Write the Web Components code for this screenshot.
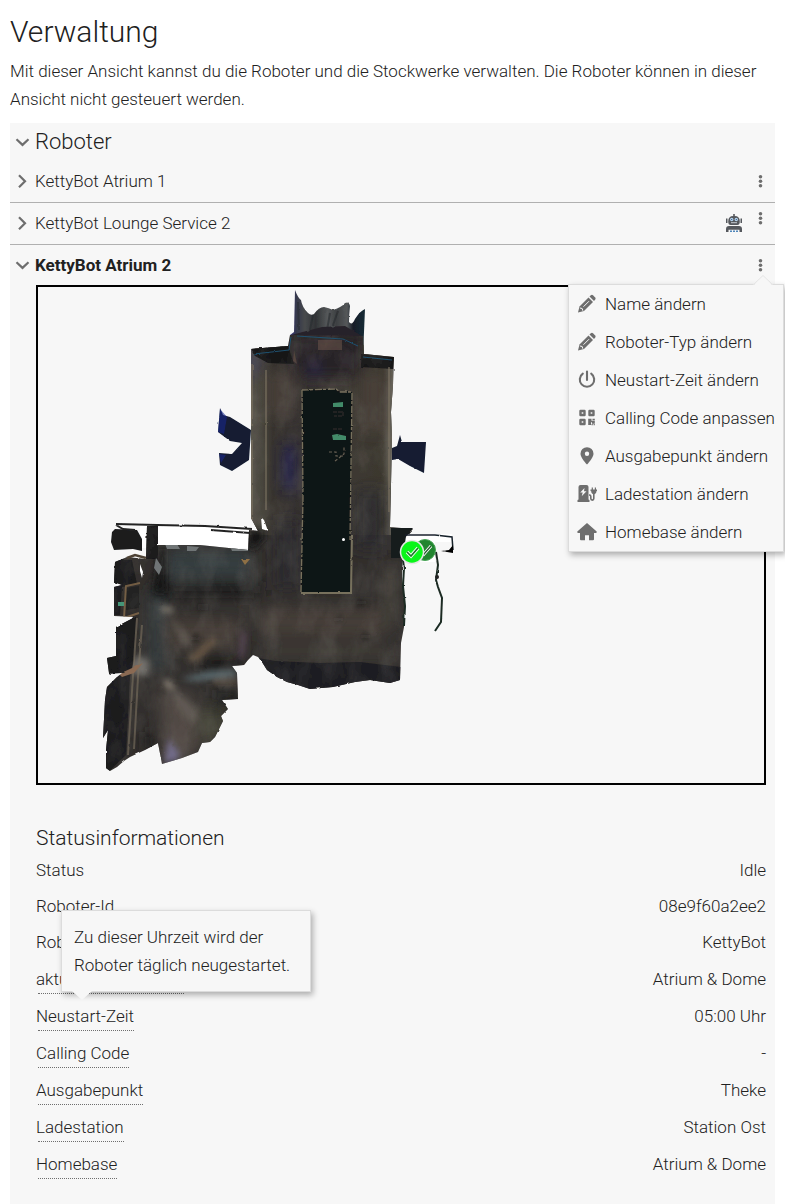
<!DOCTYPE html>
<html lang="de">
<head>
<meta charset="utf-8">
<meta name="viewport" content="width=device-width, initial-scale=1">
<title>Verwaltung</title>
<style>
  body { margin: 0; background: #fff; color: #212121; font: 300 17px/28px Roboto, sans-serif; }
</style>
</head>
<body>
<admin-page>
  <span slot="title">Verwaltung</span>
  <span slot="intro">Mit dieser Ansicht kannst du die Roboter und die Stockwerke verwalten. Die Roboter können in dieser Ansicht nicht gesteuert werden.</span>
  <robot-row>KettyBot Atrium 1</robot-row>
  <robot-row busy>KettyBot Lounge Service 2</robot-row>
  <robot-row open>KettyBot Atrium 2
    <action-menu slot="menu">
      <menu-entry icon="pencil">Name ändern</menu-entry>
      <menu-entry icon="pencil">Roboter-Typ ändern</menu-entry>
      <menu-entry icon="power">Neustart-Zeit ändern</menu-entry>
      <menu-entry icon="qr">Calling Code anpassen</menu-entry>
      <menu-entry icon="pin">Ausgabepunkt ändern</menu-entry>
      <menu-entry icon="charger">Ladestation ändern</menu-entry>
      <menu-entry icon="home">Homebase ändern</menu-entry>
    </action-menu>
    <floor-map slot="details"></floor-map>
    <status-list slot="details">
      <status-item value="Idle">Status</status-item>
      <status-item value="08e9f60a2ee2">Roboter-Id</status-item>
      <status-item value="KettyBot">Roboter-Typ</status-item>
      <status-item hint value="Atrium &amp; Dome">aktuelles Stockwerk</status-item>
      <status-item hint value="05:00 Uhr">Neustart-Zeit<hint-bubble slot="bubble">Zu dieser Uhrzeit wird der Roboter täglich neugestartet.</hint-bubble></status-item>
      <status-item hint value="-">Calling Code</status-item>
      <status-item hint value="Theke">Ausgabepunkt</status-item>
      <status-item hint value="Station Ost">Ladestation</status-item>
      <status-item hint value="Atrium &amp; Dome">Homebase</status-item>
    </status-list>
  </robot-row>
</admin-page>

<script>
const define = (name, render) => customElements.define(name, class extends HTMLElement {
  constructor() {
    super();
    this.attachShadow({ mode: 'open' }).innerHTML = render(this);
  }
});

const chevron = open => `<svg width="15" height="15" viewBox="0 0 15 15" fill="none" stroke="#6e6e6e" stroke-width="2.2" aria-hidden="true"><path d="${open ? 'M1.5 4.2 7.5 9.900 13.5 4.2' : 'M4 1.2 10 7.2 4 13.2'}"/></svg>`;

const icons = {
  pencil: '<path d="M1 18.500l1.500-6L11.500 3.500l4.500 4.500L7 17z"/><path d="M12.500 2.500l1.300-1.300q1.200-.8 2.200 0l2.200 2.200q.9 1.100 0 2.200L17 7z"/><path d="M6.500 12.700l5.500-5.500" stroke="#f7f7f7" stroke-width="1"/><path d="M2.900 14l2.300.5.600 2.200" stroke="#f7f7f7" fill="none" stroke-width="1"/>',
  power: '<path d="M10 1.500v8.500M5.800 3.700a7.200 7.200 0 1 0 8.400 0" fill="none" stroke="#6e6e6e" stroke-width="2.100" stroke-linecap="round"/>',
  qr: '<path d="M3.500 3h4v4h-4zM12.500 3h4v4h-4zM3.500 12h4v4h-4z" fill="none" stroke="#6e6e6e" stroke-width="2.400" stroke-linejoin="round"/><path d="M11.200 10.800h3.300v2h3.300v3h-2.800v-1.500h-1v2.700h-2.800zM15.500 10.800h2.300v1.400h-2.300zM14.500 16h1.300v1.300h-1.300zM16.600 16h1.200v1.300h-1.200z"/>',
  pin: '<path fill-rule="evenodd" d="M10 1.200a6.500 6.500 0 0 0-6.500 6.500c0 3 3.800 8 6.500 10.800 2.700-2.800 6.500-7.800 6.500-10.800A6.500 6.500 0 0 0 10 1.200zm0 4.300a2.200 2.200 0 1 1 0 4.400 2.200 2.200 0 0 1 0-4.400z"/>',
  charger: '<path fill-rule="evenodd" d="M1.500 3q0-2 2-2h6q2 0 2 2v12.500l1 .5v2H.5v-2l1-.5zM7.500 4L3.200 8.500h2.500l-1 3.700L9.500 7.300H7z"/><path d="M12 11h.5q1.300 0 1.300 1.500v2q0 1.600 1.500 1.600t1.500-1.600V9" fill="none" stroke="#6e6e6e" stroke-width="1.600"/><path d="M13.500 5.500h6.500v1.500l-.6.300q0 2.700-2.600 3-2.600-.3-2.600-3l-.7-.3zM14.700 3.500h1.200v2h-1.200zM17.800 3.500H19v2h-1.200z"/>',
  home: '<path d="M10 1L.3 9.500q-.3 1.500 1 1.500H3v6.300q0 1 1 1h4v-5h4v5h4q1 0 1-1V11h1.700q1.300 0 1-1.500z"/>'
};

define('admin-page', () => `
  <style>
    :host { display: flex; flex-direction: column; box-sizing: border-box; min-height: 100vh; padding: 12px 10px 0; }
    h1 { margin: 0 0 5px; font-size: 30px; line-height: 40px; font-weight: 300; }
    p { margin: 0 0 10px; }
    section { flex: 1; background: #f7f7f7; }
    h2 { margin: 0; font-size: 22px; line-height: 38px; font-weight: 300; }
    h2 button { all: unset; display: flex; align-items: center; gap: 5px; padding-left: 5px; cursor: pointer; }
  </style>
  <h1><slot name="title"></slot></h1>
  <p><slot name="intro"></slot></p>
  <section><h2><button aria-expanded="true">${chevron(true)}Roboter</button></h2><slot></slot></section>`);

define('robot-row', el => {
  const open = el.hasAttribute('open'), busy = el.hasAttribute('busy');
  return `
  <style>
    :host { display: block; border-bottom: 1px solid #b0b0b0; }
    :host([open]) { border-bottom: 0; }
    header { position: relative; display: flex; justify-content: space-between; align-items: center; height: 40px; padding: 0 8px 0 5px; }
    :host(:not([open])) header { padding-bottom: 1px; }
    button { all: unset; cursor: pointer; }
    .name { display: flex; align-items: center; gap: 5px; white-space: nowrap; }
    :host([open]) .name { font-weight: 700; }
    .actions { display: flex; align-items: center; gap: 11px; }
    .actions svg { display: block; }
    :host([busy]) .more { margin-bottom: 10px; }
    .details { padding: 0 9px 20px 26px; }
  </style>
  <header>
    <button class="name" aria-expanded="${open}">${chevron(open)}<span><slot></slot></span></button>
    <div class="actions">
      ${busy ? `<svg width="18" height="20" viewBox="0 0 18 20" role="img" aria-label="Roboter"><path fill="#55585d" d="M8.200 1h1.600v2q5 0 5 5.500 0 3.500-2.500 3.500H5.700Q3.200 12 3.200 8.500 3.200 3 8.200 3zM1 5.500h1.500v4.500H1zM15.500 5.500H17v4.500h-1.500zM4 13h10q3 0 3 3v3h-2.500v-2.200h-11V19H1v-3q0-3 3-3z"/><circle cx="6.700" cy="6.500" r="1.700" fill="#b4d4f0"/><circle cx="11.300" cy="6.500" r="1.700" fill="#b4d4f0"/><path fill="#33517a" d="M6.200 6h1v1h-1zM10.800 6h1v1h-1z"/><path fill="#c5cbd1" d="M6 9.200h6v1H6z"/><path fill="#4f86ba" d="M5 17.500h2v1.500H5zM8 17.500h2v1.500H8zM11 17.500h2v1.500h-2z"/></svg>` : ''}
      <button class="more" aria-label="Aktionen" aria-expanded="${open}"><svg width="13" height="15" viewBox="0 0 13 15" fill="#6e6e6e"><circle cx="6.500" cy="2.700" r="1.800"/><circle cx="6.500" cy="7.200" r="1.800"/><circle cx="6.500" cy="11.700" r="1.800"/></svg></button>
    </div>
    <slot name="menu"></slot>
  </header>
  ${open ? '<div class="details"><slot name="details"></slot></div>' : ''}`;
});

define('action-menu', () => `
  <style>
    :host { position: absolute; z-index: 2; top: 39px; right: -9px; width: 214px; font-weight: 300; background: #f7f7f7; border: 1px solid #dcdcdc; box-shadow: 2px 3px 6px rgba(0,0,0,.3); }
    .tip { position: absolute; top: -10px; right: 9px; display: block; }
  </style>
  <svg class="tip" width="22" height="11" viewBox="0 0 22 11" aria-hidden="true"><path d="M1 11 11 1l10 10z" fill="#f7f7f7"/><path d="M1 10 11 .5 21 10" fill="none" stroke="#e4e4e4"/></svg>
  <slot></slot>`);

define('menu-entry', el => `
  <style>
    :host { display: block; }
    button { all: unset; display: flex; align-items: center; gap: 8px; height: 38px; padding-left: 8px; white-space: nowrap; cursor: pointer; }
  </style>
  <button><svg width="20" height="20" viewBox="0 0 20 20" fill="#6e6e6e" aria-hidden="true">${icons[el.getAttribute('icon')]}</svg><span><slot></slot></span></button>`);

define('floor-map', () => `
  <style>
    :host { display: block; border: 2px solid #000; margin-bottom: 37px; }
    svg { display: block; width: 100%; height: 496px; }
  </style>
  <svg viewBox="38 287 726 496" preserveAspectRatio="xMinYMin slice" role="img" aria-label="Stockwerkskarte">
    <defs>
      <filter id="soft" x="-50%" y="-50%" width="200%" height="200%"><feGaussianBlur stdDeviation="7"/></filter>
      <filter id="fine" x="-50%" y="-50%" width="200%" height="200%"><feGaussianBlur stdDeviation="3"/></filter>
      <filter id="rough" x="-5%" y="-5%" width="110%" height="110%"><feTurbulence type="fractalNoise" baseFrequency=".14" numOctaves="2" seed="4"/><feDisplacementMap in="SourceGraphic" scale="2" xChannelSelector="R" yChannelSelector="G"/></filter>
      <filter id="scan" x="0" y="0" width="100%" height="100%"><feTurbulence type="fractalNoise" baseFrequency=".05 .03" numOctaves="4" seed="9"/><feColorMatrix values="0 0 0 0 .48  0 0 0 0 .45  0 0 0 0 .4  1.6 0 0 0 -.62"/></filter>
      <linearGradient id="crown" x1="0" x2="1"><stop offset="0" stop-color="#3a3580"/><stop offset=".08" stop-color="#35374c"/><stop offset=".2" stop-color="#47494c"/><stop offset=".34" stop-color="#303335"/><stop offset=".5" stop-color="#55585a"/><stop offset=".62" stop-color="#3d4042"/><stop offset=".76" stop-color="#55585a"/><stop offset=".84" stop-color="#151c28"/><stop offset="1" stop-color="#172c36"/></linearGradient>
      <linearGradient id="walls" x1="0" x2="1"><stop offset="0" stop-color="#57544c"/><stop offset=".1" stop-color="#45423a"/><stop offset=".16" stop-color="#37332e"/><stop offset=".3" stop-color="#34302f"/><stop offset=".7" stop-color="#3d3933"/><stop offset=".93" stop-color="#3b372e"/><stop offset="1" stop-color="#66635a"/></linearGradient>
      <clipPath id="hall"><path d="M251 349 288 346 290 335 363 336 364 354 394 357 393 385 391 412 392 438 391 485 390 527 413 529 403 540 402 577 405 607 404 627 401 643 400 680 390 683 370 680 355 682 333 687 310 689 298 685 287 682 277 677 267 670 262 662 258 657 253 655 248 660 244 665 232 666 237 673 238 699 222 700 228 709 221 716 223 721 215 737 210 742 202 743 198 752 182 758 162 764 158 743 145 750 130 757 124 761 117 767 110 771 106 768 106 750 108 730 103 738 105 700 107 687 117 677 109 673 107 658 116 656 116 627 135 617 114 616 114 587 122 585 114 582 115 562 127 557 146 559 147 526 158 526 158 545 200 545 248 550 249 530 258 531 251 518z"/></clipPath>
    </defs>
    <path fill="#fff" d="M140 525h20v23h-20zM158 526h91v22h-91zM405 534h47v8h-17v20h-30z"/>
    <g filter="url(#rough)">
      <path fill="url(#crown)" d="M295 290Q298 298 301 300Q302 307 308 313Q311 316 314 314Q319 307 324 307Q329 308 333 310Q342 307 345 303Q349 301 350 306Q349 315 349 322Q352 326 355 319Q360 311 365 309L363 355 291 353 290 335 294 332z"/>
      <path fill="none" stroke="#25282b" stroke-width="2" opacity=".55" d="M313 315 309 335M330 313 327 330M333 325 338 311M298 302 299 330"/>
      <path fill="#28232a" d="M291 335 322 327 345 326 362 336 362 356 291 354z"/>
      <path fill="#131b30" d="M220 408 223 415 230 417 251 430 249 460 232 471 220 465 219 453 232 454 242 443 230 441 218 432zM392 448 397 446 400 435 402 442 426 442 424 473 410 466 398 459 392 460z"/>
      <path fill="#17278a" d="M220 409 227 417 224 434 218 432zM219 454 226 455 221 463z" opacity=".6"/>
      <g clip-path="url(#hall)">
        <path fill="#322f2d" d="M95 330h325v450H95z"/>
        <path fill="url(#walls)" d="M250 345h143v190H250z"/>
        <g filter="url(#soft)">
          <path fill="#282127" d="M292 335h70v42h-70z"/>
          <path fill="#4b443c" d="M360 372h28v60h-28zM266 372h30v45h-30zM260 608h125v28H260zM165 618h75v30h-75z" opacity=".7"/>
          <path fill="#4a423c" d="M382 570h16v60h-16zM270 645h120v12H270z" opacity=".6"/>
          <path fill="#2b2a30" d="M275 520h25v70h-25zM355 490h30v60h-30z" opacity=".7"/>
          <path fill="#232058" d="M284 445h10v45h-10zM251 352h6v22h-6zM312 364h6v10h-6z"/>
          <path fill="#363d40" d="M165 550h85v28h-85zM150 590h14v80h-14z"/>
          <path fill="#1f1d1c" d="M155 582h105v16H155zM200 655h45v16h-45zM212 685h30v18h-30zM145 732h15v20h-15z"/>
          <path fill="#57504a" d="M158 690 192 693 200 750 165 762z" opacity=".8"/>
          <path fill="#3c3c30" d="M197 708h28v34h-28z"/>
        </g>
        <g filter="url(#fine)">
          <path fill="#a69b8c" opacity=".75" d="M161 606l10 1 4 6-13-2zM163 679l9 3 4 8-12-4z"/>
          <path fill="#8b8983" opacity=".7" d="M130 664l8-10 12 8-2 14-16-2z"/>
          <path fill="#7a736b" opacity=".45" d="M166 612l28 30-8 6zM166 685l34 26-10 14z"/>
          <path fill="#77709a" opacity=".8" d="M169 738l11 17-5 6-11 2z"/>
          <path fill="#6f5572" opacity=".7" d="M242 630l4 3-3 28-4-4z"/>
          <path fill="#6d858c" opacity=".7" d="M180 679l30-8 26-1v6l-40 5z"/>
          <path fill="#8d7358" opacity=".55" d="M186 659l26-21 6 2-21 23zM212 680h25v4h-25z"/>
        </g>
        <g filter="url(#fine)" opacity=".9"><path fill="#151617" d="M248 529h17v10l-9 10h-8zM160 549h6v44h-13zM359 600h5v5h-5zM336 617h5v5h-5zM363 634h5v5h-5zM200 604h6v6h-6zM193 636h5v5h-5z"/></g>
        <path fill="#171718" d="M146 525h12v34h-12z"/>
        <path fill="#1a1a1c" d="M115 617 136 617 134 660 130 677 126 755 100 780V617zM112 560 132 560 137 584 122 587 120 615H112z"/>
        <path fill="#1e1e22" d="M258 658 275 661 320 663 360 662 401 667V692H260z"/>
        <path fill="#171718" d="M251 348 288 346 294 364 268 363 255 356zM361 354 394 357 393 369 361 367z"/>
        <path fill="#222" d="M126 588 139 586 139 608 126 610z"/>
        <path filter="url(#scan)" opacity=".18" d="M100 330h315v450H100z"/>
        <path fill="none" stroke="#20516f" d="M254 354 289 350 291 337M363 357 392 360M297 336 343 339 358 346"/>
        <path fill="none" stroke="#7b7160" stroke-width="2" opacity=".6" d="M137 618 133 675 128 755M142 625 138 677 134 749M252 364v62M252 440v80M266 370v140M389 367v145"/>
        <path fill="none" stroke="#856a4b" stroke-width="2" opacity=".8" d="M140 583 126 586 124 618 139 613"/>
        <path fill="#6b5349" opacity=".55" d="M318 340h24v10h-24zM294 350l3 14-4-3z"/>
        <path fill="#707576" d="M165 544h12l3 5h-13zM187 546l12 1-3 4h-9zM230 546h18v5h-16zM156 558l6 9-3 8-5-7z"/>
        <path fill="#a37a46" opacity=".8" d="M241 559h9l-5 6z"/>
        <path fill="#8a6a52" d="M119 674l24-11-9 10-12 4z"/>
        <path fill="#459578" d="M118 602h6v4h-6z"/>
      </g>
      <path fill="#f7f7f7" d="M108 674l14-1-5 4-10 2z"/>
      <path fill="#1b1c1e" d="M112 532l3-3 22 1 5 9v12l-9-2-19 1-3-8z"/>
      <path fill="none" stroke="#242424" stroke-width="2" d="M116 524 157 525 205 526 252 529M211 530 250 533M116 525l7 4 12 1"/>
      <path fill="none" stroke="#4d4335" stroke-width="2.500" d="M127 558l8-3 11 3"/>
      <path fill="#fff" d="M261 517 264 520 268 531 262 529zM140 564l3 8-1 6-2-7z"/>
      <path fill="#111314" d="M302 390 336 389 340 392 352 392 350 592 301 592 303 498z"/>
      <path fill="none" stroke="#77715d" stroke-width="1.300" stroke-dasharray="7 1 3 2" d="M302 390 336 389 340 392 352 392 350 540M302 390 303 498 301 592"/>
      <path fill="none" stroke="#77715d" stroke-width="2" d="M301 593 351 593 352 535"/>
      <path fill="#438b69" d="M333 403l10-1v5h-10zM332 435l5-1 9 2v4h-13z"/>
      <path fill="none" stroke="#656254" stroke-width="1.200" stroke-dasharray="3 2" d="M329 452h7v4h8M335 461l9-7v-7"/>
      <path fill="none" stroke="#303333" stroke-dasharray="4 1" d="M333 412h10v4h-9M333 429h10"/>
      <path fill="#171a1b" d="M391 528h22l-7 8-3 22h-12z"/>
      <path fill="none" stroke="#19212b" stroke-width="1.500" d="M405 535 435 535 452 537 453 550"/>
      <path d="M441 551l8-1 4-5v8l-6-1z"/>
      <path fill="none" stroke="#1b2b24" stroke-width="2" d="M436 552 438 565 436 580 438 587 442 598 441 622 435 631M403 560l1 8-1 18 2 20-1 20"/>
      <circle cx="437" cy="577" r="2" fill="#222"/>
    </g>
    <circle cx="343.500" cy="539.500" r="1.500" fill="#fff"/>
    <circle cx="425" cy="550" r="10.500" fill="#21852f" stroke="#49a557"/>
    <path d="M420 550l4 4 7-8" fill="none" stroke="#fff" stroke-width="3"/><path d="M420 550l4 4 7-8" fill="none" stroke="#24552b" stroke-width="1.200"/>
    <circle cx="412" cy="552" r="11.500" fill="#0af51a" stroke="#e5e5e5" stroke-width="1.500"/>
    <path d="M407 552l4 4 7-8" fill="none" stroke="#e9ffe9" stroke-width="3.500"/><path d="M407 552l4 4 7-8" fill="none" stroke="#20742b" stroke-width="1.600"/>
  </svg>`);

define('status-list', () => `
  <style>
    :host { display: block; }
    h3 { margin: 0; padding-top: 2px; font-size: 21px; line-height: 28px; font-weight: 300; }
  </style>
  <h3>Statusinformationen</h3>
  <div role="list"><slot></slot></div>`);

define('status-item', el => `
  <style>
    :host { display: flex; justify-content: space-between; padding: 4px 0; }
    :host([hint]) { padding: 5px 0 3px; }
    .label { position: relative; }
    :host([hint]) .label::after { content: ""; display: block; margin-left: 2px; border-top: 1px dotted #6e6e6e; }
  </style>
  <div class="label"><slot></slot><slot name="bubble"></slot></div><div>${el.getAttribute('value').replace('&', '&amp;')}</div>`);

define('hint-bubble', () => `
  <style>
    :host { position: absolute; z-index: 1; left: 25px; bottom: calc(100% + 10px); box-sizing: border-box; width: 250px; padding: 12px; background: #f7f7f7; border: 1px solid #dcdcdc; box-shadow: 2px 3px 6px rgba(0,0,0,.3); }
    svg { position: absolute; top: 100%; left: 10px; display: block; }
  </style>
  <slot></slot>
  <svg width="20" height="10" viewBox="0 0 20 10" aria-hidden="true"><path d="M0 0h20L10 9z" fill="#f7f7f7"/></svg>`);
</script>
</body>
</html>
